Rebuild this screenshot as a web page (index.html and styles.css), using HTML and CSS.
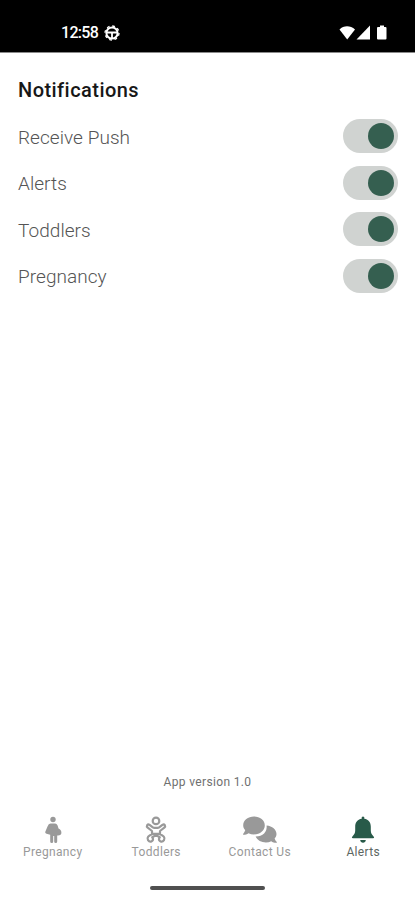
FILE: index.html
```
<!DOCTYPE html>
<html lang="en">
<head>
  <meta charset="UTF-8">
  <meta name="viewport" content="width=device-width, initial-scale=1.0">
  <title>Notifications</title>
  <link rel="stylesheet" href="styles.css">
</head>
<body>
  <header class="status-bar">
    <div class="status-left">
      <span class="time">12:58</span>
      <svg width="16" height="16" viewBox="0 0 16 16" fill="none" stroke="#fff">
        <circle cx="8" cy="8" r="5.6" stroke-width="2"/>
        <circle cx="8" cy="8" r="7" stroke-width="1.3" stroke-dasharray="2.75 2.75"/>
        <path d="M3 7.5h10M8 8v5" stroke-width="1.8"/>
      </svg>
    </div>
    <svg class="status-icons" width="48" height="16" viewBox="0 0 48 16" fill="#fff">
      <path d="M.5 4.4C4.6.3 11.4.3 16 4.4L8.200 14.500z"/>
      <path d="M31 .5v14H17.500z"/>
      <path d="M41 .5h4V2h1.500q1 0 1 1v10.500q0 1-1 1h-7.500q-1 0-1-1V3q0-1 1-1h2z"/>
    </svg>
  </header>

  <main class="settings">
    <h1>Notifications</h1>
    <label class="setting">
      <span>Receive Push</span>
      <input type="checkbox" class="switch" checked>
    </label>
    <label class="setting">
      <span>Alerts</span>
      <input type="checkbox" class="switch" checked>
    </label>
    <label class="setting">
      <span>Toddlers</span>
      <input type="checkbox" class="switch" checked>
    </label>
    <label class="setting">
      <span>Pregnancy</span>
      <input type="checkbox" class="switch" checked>
    </label>
  </main>

  <p class="version">App version 1.0</p>

  <nav class="tabs">
    <a class="tab" href="#">
      <svg width="36" height="28" viewBox="0 0 36 28" fill="currentColor">
        <circle cx="18" cy="3.5" r="2.7"/>
        <path d="M15.500 7.500h4.500c1.500 0 2.300 1 2.700 2.300l.8 2.700c2 .8 2.900 2.300 2.900 4.200 0 1.800-1.200 2.800-3.400 2.800h-.8v6q0 1.500-1.500 1.500t-1.500-1.500v-5.500h-1v5.500q0 1.500-1.500 1.500T15.200 25.500v-6.800l-2.800-.7q-1.800-.2-2.300-1.700l2.400-5.800q1-3 3-3z"/>
      </svg>
      <span>Pregnancy</span>
    </a>
    <a class="tab" href="#">
      <svg width="36" height="28" viewBox="0 0 36 28" fill="none" stroke="currentColor" stroke-width="2.200" stroke-linecap="round" stroke-linejoin="round">
        <circle cx="18" cy="4.900" r="3.300"/>
        <path d="M14.500 11.200 11.600 8.900q-1.500-.9-2.400.3-.8 1.300.5 2.500l4.300 3.300v3.200q-2.500.8-3.800 2.500-1.300 1.700-.2 3.500 1.400 2 3.400 1.300 2.200-1 1.400-3.300l-.6-1 2.300-1.200h3l2.300 1.200-.6 1q-.8 2.300 1.400 3.300 2 .7 3.400-1.300 1.100-1.800-.2-3.500-1.300-1.700-3.800-2.500v-3.200l4.300-3.300q1.300-1.200.5-2.500-.9-1.200-2.400-.3l-2.900 2.300q-3.500 1.500-7 0z"/>
        <path d="M14.300 17.900h7.400"/>
      </svg>
      <span>Toddlers</span>
    </a>
    <a class="tab" href="#">
      <svg width="36" height="28" viewBox="0 0 36 28" fill="currentColor">
        <path d="M12 .6c6 0 10.800 3.800 10.800 8.900s-4.800 8.900-10.800 8.900c-2 0-3.900-.4-5.500-1.200-1.500 1-3.300 1.500-5.100 1.500-.5 0-.6-.5-.3-.8 1.100-1.200 1.800-2.600 2.100-3.700C1.900 12.700 1.200 11.100 1.200 9.500 1.200 4.400 6 .6 12 .6z"/>
        <path d="M24.600 9.400c5.600.6 9.900 4.100 9.900 8.500 0 1.700-.7 3.200-1.900 4.500.4 1.300 1.200 2.600 2.200 3.600.3.400.1.800-.4.800-2 0-3.800-.6-5.200-1.600-1.500.8-3.300 1.200-5.300 1.200-4.400 0-8.600-2-10.300-5.900 7.300-.1 11.800-4.700 11-11.100z"/>
      </svg>
      <span>Contact Us</span>
    </a>
    <a class="tab active" href="#">
      <svg width="36" height="28" viewBox="0 0 36 28" fill="currentColor">
        <path d="M16.700 1.300q1.300-1.400 2.600 0v1.500c4.400.7 6.500 3.700 6.500 8v3.800c0 2.600 1 4.100 2.800 5.800q1.300 1.800-.6 1.800H8q-1.900 0-.6-1.800c1.800-1.700 2.800-3.200 2.800-5.800v-3.800c0-4.300 2.100-7.300 6.500-8z"/>
        <path d="M15.200 24h5.600q-.4 2.800-2.800 2.800t-2.800-2.800z"/>
      </svg>
      <span>Alerts</span>
    </a>
  </nav>

  <div class="home-bar"></div>
</body>
</html>
```
FILE: styles.css
```
* {
  box-sizing: border-box;
}

body {
  margin: 0;
  height: 900px;
  display: flex;
  flex-direction: column;
  font-family: Roboto, "Liberation Sans", sans-serif;
  background-color: #fff;
  color: #555;
}

.status-bar {
  display: flex;
  justify-content: space-between;
  align-items: center;
  height: 53px;
  padding: 13px 28px 0 61px;
  background-color: #000;
  border-bottom: 1px solid #8a8a8a;
  color: #fff;
}

.status-left {
  display: flex;
  align-items: center;
  gap: 6px;
}

.time {
  font-size: 16px;
  font-weight: 500;
  letter-spacing: -0.7px;
}

.settings {
  padding: 24px 17px 0 18px;
}

h1 {
  margin: 0 0 15px;
  font-size: 20px;
  line-height: 27px;
  font-weight: 500;
  letter-spacing: 0.45px;
  color: #171717;
}

.setting {
  display: flex;
  align-items: center;
  justify-content: space-between;
  height: 34px;
  margin-bottom: 12.5px;
  font-size: 19px;
  font-weight: 350;
  letter-spacing: 0.05px;
}

.setting span {
  padding-top: 2px;
}

.switch {
  appearance: none;
  display: flex;
  align-items: center;
  width: 55px;
  height: 34px;
  margin: 0;
  padding: 0 4px;
  border-radius: 17px;
  background-color: #d0d3d1;
}

.switch::before {
  content: "";
  width: 26px;
  height: 26px;
  border-radius: 50%;
  background-color: #999;
}

.switch:checked {
  justify-content: flex-end;
}

.switch:checked::before {
  background-color: #355f50;
}

.version {
  margin: auto 0 26px;
  text-align: center;
  font-size: 12px;
  line-height: 16px;
  letter-spacing: 0.35px;
  color: #707070;
}

.tabs {
  display: grid;
  grid-template-columns: repeat(4, 1fr);
  padding-left: 1px;
}

.tab {
  display: flex;
  flex-direction: column;
  align-items: center;
  font-size: 12px;
  line-height: 16px;
  letter-spacing: 0.35px;
  color: #999;
  text-decoration: none;
}

.tab.active {
  color: #5d6662;
}

.tab.active svg {
  color: #285a49;
}

.home-bar {
  width: 115px;
  height: 4px;
  margin: 26px auto 10px;
  border-radius: 2px;
  background-color: #505050;
}
```
